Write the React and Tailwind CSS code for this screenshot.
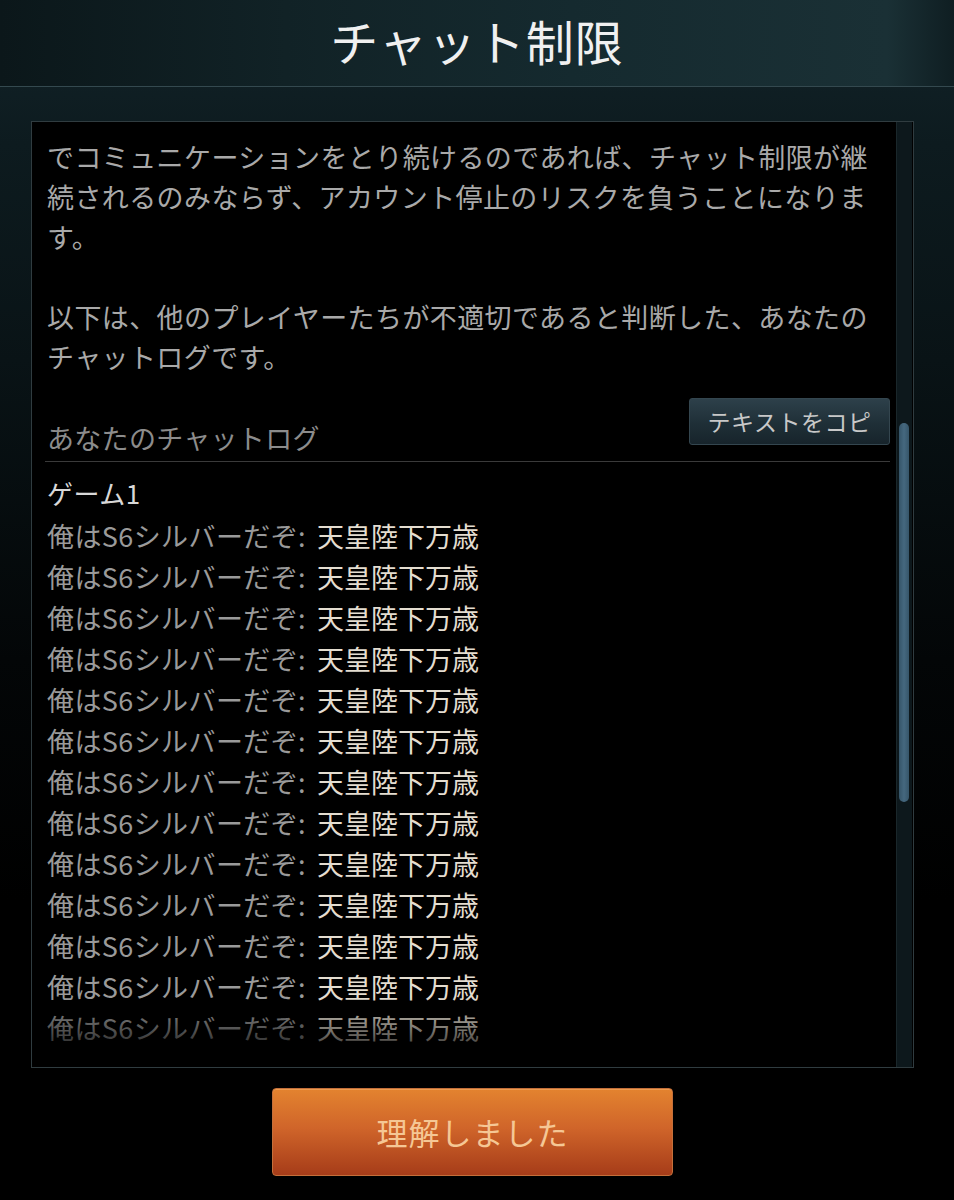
import React from 'react';

const FONT = { fontFamily: '"Noto Sans CJK JP", "Noto Sans", sans-serif' };

const ChatLine = () => (
  <div className="leading-[41px] h-[41px] whitespace-nowrap">
    <span className="text-[#9a9a9a] tracking-[0.4px]">俺はS6シルバーだぞ:</span>
    <span className="ml-[11px] text-[#e4ddd0]">天皇陸下万歳</span>
  </div>
);

export default function App() {
  const lines = Array.from({ length: 13 });

  return (
    <div
      style={FONT}
      className="relative w-[954px] h-[1200px] overflow-hidden bg-[linear-gradient(180deg,#13242a_0%,#0d1b1f_12%,#091316_30%,#030607_55%,#000_75%)]"
    >
      {/* Header */}
      <div className="h-[87px] flex items-center justify-center border-b border-[#34494f] bg-[linear-gradient(90deg,#0b171a_0%,#112226_30%,#152a2f_60%,#1a3035_93%,#0f1e22_100%)]">
        <h1 className="text-[48px] leading-none text-[#f0f0f0] font-normal tracking-[1px] -mt-[6px]">チャット制限</h1>
      </div>

      <div className="w-[883px] ml-[31px] mt-[34px]">
        {/* Panel */}
        <div className="relative h-[947px] border border-[#303c40] bg-black flex overflow-hidden">
          <div className="flex-1 pl-[15px] pr-[6px] pt-[15px] text-[27px]">
            <p className="leading-[40px] text-[#a9a9a9] tracking-[0.4px] whitespace-nowrap">
              でコミュニケーションをとり続けるのであれば、チャット制限が継
              <br />
              続されるのみならず、アカウント停止のリスクを負うことになりま
              <br />
              す。
            </p>
            <p className="mt-[40px] leading-[40px] text-[#a9a9a9] tracking-[0.4px] whitespace-nowrap">
              以下は、他のプレイヤーたちが不適切であると判断した、あなたの
              <br />
              チャットログです。
            </p>

            <div className="mt-[21px] h-[64px] flex justify-between items-start border-b border-[#3a3a3a] -ml-[2px] pl-[2px]">
              <span className="mt-[20px] leading-[40px] text-[#8c8c8c] tracking-[0.3px]">あなたのチャットログ</span>
              <button className="h-[47px] w-[201px] flex items-center justify-center rounded-[3px] border border-[#34464f] bg-[linear-gradient(180deg,#2d404a_0%,#1f2f37_55%,#17242b_100%)] text-[23px] text-[#c8c8c8] tracking-[0.5px]">
                テキストをコピ
              </button>
            </div>

            <div className="mt-[9px] leading-[44px] h-[44px] text-[#d8d8d8] text-[26px] tracking-[0.5px]">ゲーム1</div>
            <div>
              {lines.map((_, i) => (
                <ChatLine key={i} />
              ))}
            </div>
          </div>

          {/* Scrollbar */}
          <div className="relative w-[16px] mr-[1px] bg-[#0d181c] border-l border-[#1a272b]">
            <div className="absolute left-[2px] top-[301px] w-[10px] h-[379px] rounded-full bg-[linear-gradient(90deg,#355468,#45687f,#365569)]" />
          </div>

          {/* Bottom fade */}
          <div className="absolute left-0 right-[18px] bottom-0 h-[70px] bg-gradient-to-b from-black/0 to-black" />
        </div>

        {/* Confirm button */}
        <div className="flex justify-center mt-[20px]">
          <button className="w-[401px] h-[88px] rounded-[4px] border border-[#c46f3a] bg-[linear-gradient(180deg,#e3832f_0%,#d0652a_45%,#a63c19_100%)] shadow-[inset_0_1px_0_rgba(255,200,140,0.35)] text-[31px] text-[#f5c795] tracking-[1px]">
            理解しました
          </button>
        </div>
      </div>
    </div>
  );
}
